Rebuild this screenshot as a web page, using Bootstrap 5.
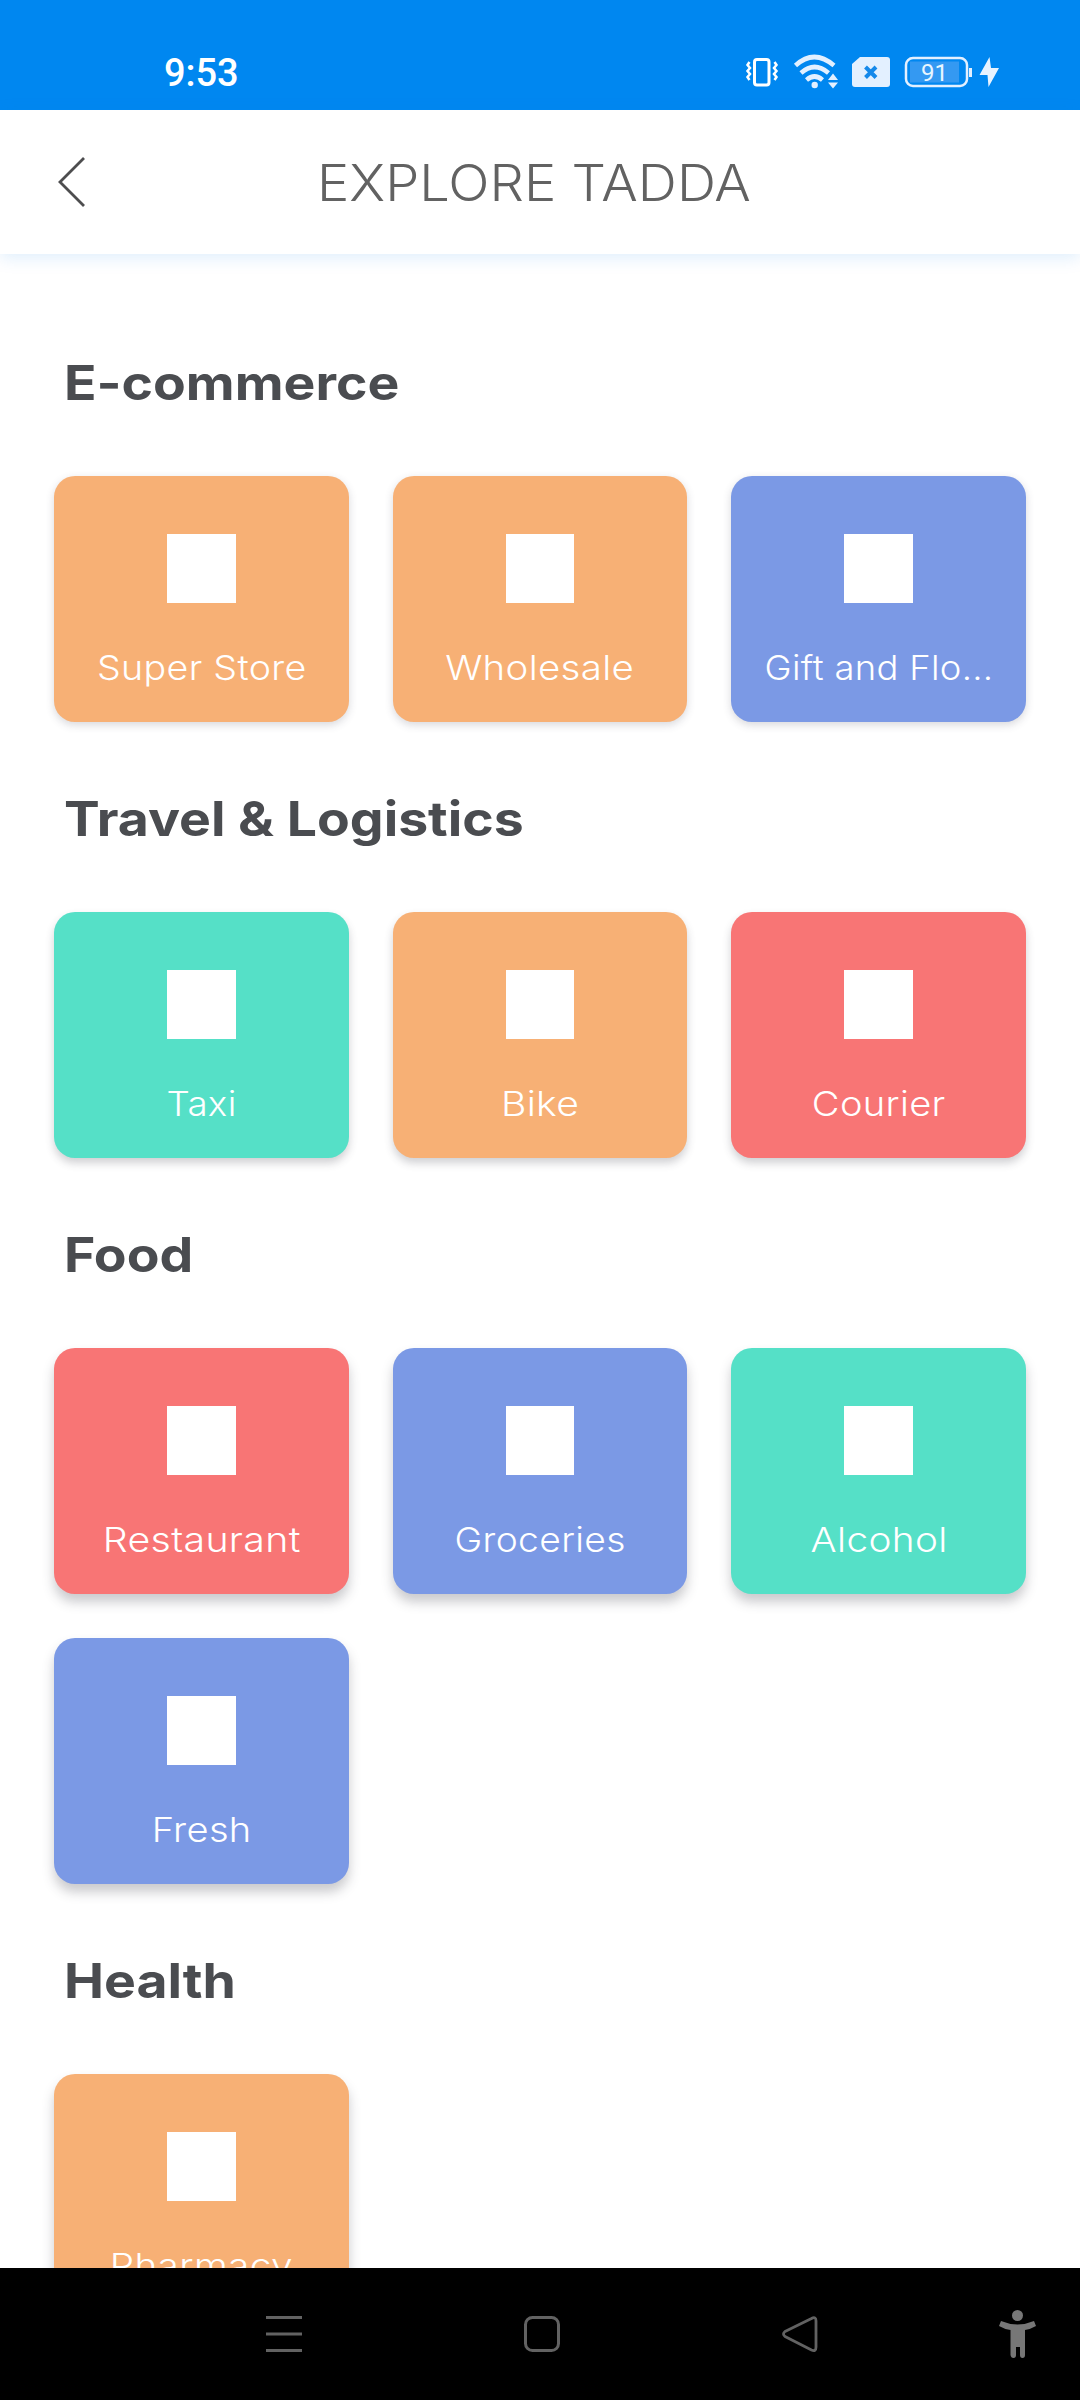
<!DOCTYPE html>
<html lang="en">
<head>
<meta charset="utf-8">
<meta name="viewport" content="width=device-width, initial-scale=1">
<title>Explore Tadda</title>
<link href="https://cdn.jsdelivr.net/npm/bootstrap@5.3.0/dist/css/bootstrap.min.css" rel="stylesheet">
<style>
body { font-family: Inter, "Liberation Sans", sans-serif; }
.phone { width: 1080px; height: 2400px; }
.status-bar { height: 110px; background: #0087f0; padding: 34px 81px 0 164px; }
.clock { font: 500 38px/78px Roboto, sans-serif; letter-spacing: -.1px; }
.status-icons { height: 76px; }
.status-icons svg, .nav-keys svg, .back svg { display: block; flex: none; }
.app-bar { height: 144px; padding-left: 57px; box-shadow: 0 4px 16px rgba(0,125,230,.13); z-index: 1; }
.screen-title { font-size: 50px; font-weight: 300; line-height: 60px; color: #626262; margin: 2px 0 0 230px; transform: scaleX(1.085); transform-origin: left; }
.content { padding: 32px 54px 0; min-height: 0; }
.group-title { height: 190px; padding: 67px 0 0 10px; font-size: 48px; font-weight: 700; line-height: 60px; color: #4a4c50; margin: 0; }
.group-title span { display: inline-block; transform: scaleX(1.115); transform-origin: left; }
.tiles { --bs-gutter-x: 44px; --bs-gutter-y: 44px; }
.tile { height: 246px; border: 0; border-radius: 21px; color: #fff; padding-top: 58px; box-shadow: 0 3px 9px rgba(60,60,80,.2); }
.lift-2 .tile { box-shadow: 0 5px 9px rgba(60,60,70,.24); }
.lift-3 .tile { box-shadow: 0 8px 12px rgba(50,50,60,.26); }
.tile-icon { width: 68.5px; height: 68.5px; background: #fff; }
.tile-label { font-size: 34px; font-weight: 300; line-height: 44px; margin-top: 43px; letter-spacing: .3px; transform: scaleX(var(--stretch, 1.12)); white-space: nowrap; }
.orange { background: #f7b075; } .indigo { background: #7b99e5; } .mint { background: #55e0c7; } .coral { background: #f87575; }
.nav-keys { height: 132px; background: #000; padding-left: 266px; gap: 222px; }
.nav-keys .assist { margin-left: -41px; }
</style>
</head>
<body>
<div class="phone d-flex flex-column bg-white overflow-hidden">
  <div class="status-bar d-flex flex-shrink-0 justify-content-between text-white">
    <div class="clock">9:53</div>
    <div class="status-icons d-flex align-items-center">
      <svg width="255" height="36" viewBox="744 54 255 36" fill="none" stroke="#e3f0ff">
        <rect x="754.5" y="59.5" width="14.5" height="25.500" rx="2.500" stroke="#fff" stroke-width="3"/>
        <path d="M749.500 62l-2 3 2.500 3-2.500 3 2.500 3-2.500 3 2 3M774.500 62l2 3-2.500 3 2.500 3-2.500 3 2.500 3-2 3" stroke="#fff" stroke-width="2.500"/>
        <path d="M795.500 65.500q18.500-17 38.500 0M801 73q13.500-12 27.500 0M806.500 80q8-7 16 0" stroke-width="4.600"/>
        <circle cx="814.700" cy="85" r="3.200" fill="#e3f0ff" stroke="none"/>
        <path d="M828 80l5-6.500 5 6.500zM828 82.500h10l-5 6z" fill="#e3f0ff" stroke="none"/>
        <path d="M860 57h27q3 0 3 3v24q0 3-3 3h-32q-3 0-3-3V64z" fill="#e3f0ff" stroke="none"/>
        <path d="M865.500 67l10.500 10.500M876 67l-10.500 10.500" stroke="#1589ea" stroke-width="4"/>
        <rect x="910" y="61.500" width="49" height="21" fill="#3499f2" stroke="none"/>
        <rect x="906" y="58" width="61" height="28" rx="7" stroke-width="2.500"/>
        <path d="M970.500 68v9" stroke-width="3"/>
        <text x="934.500" y="81" text-anchor="middle" font-family="Roboto, sans-serif" font-size="24" fill="#e8f6ff" stroke="none">91</text>
        <path d="M989.500 57l-10 18h8l1 12 10.500-19h-8z" fill="#e8f3ff" stroke="none"/>
      </svg>
    </div>
  </div>
  <header class="app-bar d-flex flex-shrink-0 align-items-center bg-white position-relative">
    <a class="back" href="#" aria-label="Back"><svg width="30" height="54" viewBox="0 0 30 54" fill="none" stroke="#4d4d4f" stroke-width="2.800"><path d="M27 3L3 27l24 24"/></svg></a>
    <h1 class="screen-title">EXPLORE TADDA</h1>
  </header>
  <main class="content flex-grow-1 overflow-hidden">
    <section>
      <h2 class="group-title"><span>E-commerce</span></h2>
      <div class="row tiles">
        <div class="col-4"><div class="card tile orange align-items-center"><div class="tile-icon"></div><div class="tile-label" style="--stretch:1.105">Super Store</div></div></div>
        <div class="col-4"><div class="card tile orange align-items-center"><div class="tile-icon"></div><div class="tile-label" style="--stretch:1.13">Wholesale</div></div></div>
        <div class="col-4"><div class="card tile indigo align-items-center"><div class="tile-icon"></div><div class="tile-label" style="--stretch:1.07">Gift and Flo...</div></div></div>
      </div>
    </section>
    <section class="lift-2">
      <h2 class="group-title"><span>Travel &amp; Logistics</span></h2>
      <div class="row tiles">
        <div class="col-4"><div class="card tile mint align-items-center"><div class="tile-icon"></div><div class="tile-label" style="--stretch:1.08">Taxi</div></div></div>
        <div class="col-4"><div class="card tile orange align-items-center"><div class="tile-icon"></div><div class="tile-label" style="--stretch:1.15">Bike</div></div></div>
        <div class="col-4"><div class="card tile coral align-items-center"><div class="tile-icon"></div><div class="tile-label" style="--stretch:1.12">Courier</div></div></div>
      </div>
    </section>
    <section class="lift-3">
      <h2 class="group-title"><span>Food</span></h2>
      <div class="row tiles">
        <div class="col-4"><div class="card tile coral align-items-center"><div class="tile-icon"></div><div class="tile-label" style="--stretch:1.155">Restaurant</div></div></div>
        <div class="col-4"><div class="card tile indigo align-items-center"><div class="tile-icon"></div><div class="tile-label" style="--stretch:1.095">Groceries</div></div></div>
        <div class="col-4"><div class="card tile mint align-items-center"><div class="tile-icon"></div><div class="tile-label" style="--stretch:1.14">Alcohol</div></div></div>
        <div class="col-4"><div class="card tile indigo align-items-center"><div class="tile-icon"></div><div class="tile-label" style="--stretch:1.12">Fresh</div></div></div>
      </div>
    </section>
    <section class="lift-3">
      <h2 class="group-title"><span>Health</span></h2>
      <div class="row tiles">
        <div class="col-4"><div class="card tile orange align-items-center"><div class="tile-icon"></div><div class="tile-label" style="--stretch:1.14">Pharmacy</div></div></div>
      </div>
    </section>
  </main>
  <nav class="nav-keys d-flex align-items-center flex-shrink-0">
    <svg width="36" height="36" stroke="#626262" stroke-width="3"><path d="M0 1.500h36M0 18h36M0 34.500h36"/></svg>
    <svg width="36" height="36" fill="none" stroke="#626262" stroke-width="3"><rect x="1.500" y="1.500" width="33" height="33" rx="7"/></svg>
    <svg width="36" height="36" fill="none" stroke="#626262" stroke-width="2.800" stroke-linejoin="round"><path d="M3 15.500Q0 18 3 20.500L29.500 34Q34 36 34 31V5Q34 0 29.500 2.500z"/></svg>
    <svg class="assist" width="37" height="48" viewBox="0 0 37 48" fill="#777"><circle cx="18.500" cy="5.500" r="5.500"/><path d="M2 11q16.500 7 33 0l2 5q-5 3-11 4v25q0 3-2.500 3t-2.500-3v-8h-4v8q0 3-2.500 3t-3-3V20Q5 19 0 16z"/></svg>
  </nav>
</div>
<script src="https://cdn.jsdelivr.net/npm/bootstrap@5.3.0/dist/js/bootstrap.bundle.min.js"></script>
</body>
</html>
